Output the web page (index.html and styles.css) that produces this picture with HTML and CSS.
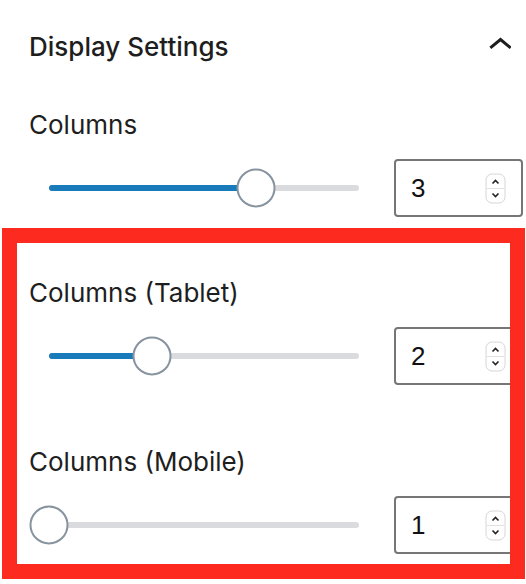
FILE: index.html
```html
<!DOCTYPE html>
<html lang="en">
<head>
<meta charset="utf-8">
<title>Display Settings</title>
<link rel="stylesheet" href="styles.css">
</head>
<body>
<div class="panel">
  <div class="panel-header">
    <h2 class="panel-title">Display Settings</h2>
    <svg class="chevron" width="24" height="24" viewBox="0 0 24 24" aria-hidden="true">
      <path d="M4.5 12 L13.5 4.5 L22.5 12" fill="none" stroke="#1e1e1e" stroke-width="3" stroke-linecap="square" stroke-linejoin="miter"/>
    </svg>
  </div>

  <div class="controls">
    <div class="control">
      <div class="control-label">Columns</div>
      <div class="control-row">
        <div class="range">
          <div class="track">
            <div class="fill" style="width: 66.667%"></div>
            <div class="thumb" style="left: 66.667%"></div>
          </div>
        </div>
        <div class="number">
          <span class="number-value">3</span>
          <svg class="spinner" width="21" height="31" viewBox="0 0 21 31" aria-hidden="true">
            <rect x="1" y="1" width="19" height="29" rx="6" fill="#fff" stroke="#d6d6d6"/>
            <line x1="2" y1="15.5" x2="19" y2="15.5" stroke="#e2e2e2"/>
            <path d="M7.5 10.5 L10.5 7.5 L13.5 10.5" fill="none" stroke="#222" stroke-width="1.6"/>
            <path d="M7.5 20.5 L10.5 23.5 L13.5 20.5" fill="none" stroke="#222" stroke-width="1.6"/>
          </svg>
        </div>
      </div>
    </div>

    <div class="highlight-group">
      <div class="control">
        <div class="control-label">Columns (Tablet)</div>
        <div class="control-row">
          <div class="range">
            <div class="track">
              <div class="fill" style="width: 33.333%"></div>
              <div class="thumb" style="left: 33.333%"></div>
            </div>
          </div>
          <div class="number">
            <span class="number-value">2</span>
            <svg class="spinner" width="21" height="31" viewBox="0 0 21 31" aria-hidden="true">
              <rect x="1" y="1" width="19" height="29" rx="6" fill="#fff" stroke="#d6d6d6"/>
              <line x1="2" y1="15.5" x2="19" y2="15.5" stroke="#e2e2e2"/>
              <path d="M7.5 10.5 L10.5 7.5 L13.5 10.5" fill="none" stroke="#222" stroke-width="1.6"/>
              <path d="M7.5 20.5 L10.5 23.5 L13.5 20.5" fill="none" stroke="#222" stroke-width="1.6"/>
            </svg>
          </div>
        </div>
      </div>

      <div class="control">
        <div class="control-label">Columns (Mobile)</div>
        <div class="control-row">
          <div class="range">
            <div class="track">
              <div class="fill" style="width: 0%"></div>
              <div class="thumb" style="left: 0%"></div>
            </div>
          </div>
          <div class="number">
            <span class="number-value">1</span>
            <svg class="spinner" width="21" height="31" viewBox="0 0 21 31" aria-hidden="true">
              <rect x="1" y="1" width="19" height="29" rx="6" fill="#fff" stroke="#d6d6d6"/>
              <line x1="2" y1="15.5" x2="19" y2="15.5" stroke="#e2e2e2"/>
              <path d="M7.5 10.5 L10.5 7.5 L13.5 10.5" fill="none" stroke="#222" stroke-width="1.6"/>
              <path d="M7.5 20.5 L10.5 23.5 L13.5 20.5" fill="none" stroke="#222" stroke-width="1.6"/>
            </svg>
          </div>
        </div>
      </div>

      <div class="highlight-frame" aria-hidden="true"></div>
    </div>
  </div>
</div>
</body>
</html>
```

FILE: styles.css
```css
* {
  box-sizing: border-box;
}

html, body {
  margin: 0;
  padding: 0;
  background: #ffffff;
}

html {
  min-height: 100%;
}

body {
  min-height: 584px;
  font-family: Inter, "Noto Sans", "Liberation Sans", sans-serif;
  color: #1e1e1e;
}

.panel {
  padding: 0 3px 30px 29px;
}

.panel-header {
  display: flex;
  align-items: center;
  justify-content: space-between;
  padding-top: 31px;
  padding-right: 12px;
}

.panel-title {
  margin: 0;
  font-size: 26px;
  line-height: 32px;
  font-weight: 500;
  letter-spacing: 0;
}

.chevron {
  display: block;
  flex: none;
}

.controls {
  display: flex;
  flex-direction: column;
  gap: 60px;
  margin-top: 46px;
}

.highlight-group {
  position: relative;
  display: flex;
  flex-direction: column;
  gap: 61px;
}

.control {
  display: flex;
  flex-direction: column;
  gap: 18px;
}

.control-label {
  font-size: 26px;
  line-height: 32px;
  font-weight: 400;
}

.control-row {
  display: flex;
  align-items: center;
  gap: 16px;
}

.range {
  flex: 1;
  height: 40px;
  display: flex;
  align-items: center;
  padding: 0 19px 0 19.5px;
}

.track {
  position: relative;
  width: 100%;
  height: 6px;
  border-radius: 3px;
  background: #dadbde;
}

.fill {
  height: 100%;
  border-radius: 3px;
  background: #1a7bbb;
}

.thumb {
  position: absolute;
  top: 50%;
  width: 39px;
  height: 39px;
  border-radius: 50%;
  background: #ffffff;
  border: 2px solid #87939e;
  transform: translate(-50%, -50%);
}

.number {
  flex: none;
  width: 129px;
  height: 58px;
  border: 2px solid #767676;
  border-radius: 4px;
  display: flex;
  align-items: center;
  justify-content: space-between;
  padding: 0 15px 0 15px;
  background: #fff;
}

.number-value {
  font-family: "Liberation Sans", Arial, sans-serif;
  font-size: 26px;
  line-height: 32px;
  color: #111;
}

.spinner {
  display: block;
  flex: none;
}

.highlight-frame {
  position: absolute;
  left: -27px;
  top: -49px;
  right: -2px;
  bottom: -25px;
  border: 15px solid #fd2a1f;
  pointer-events: none;
}
```
